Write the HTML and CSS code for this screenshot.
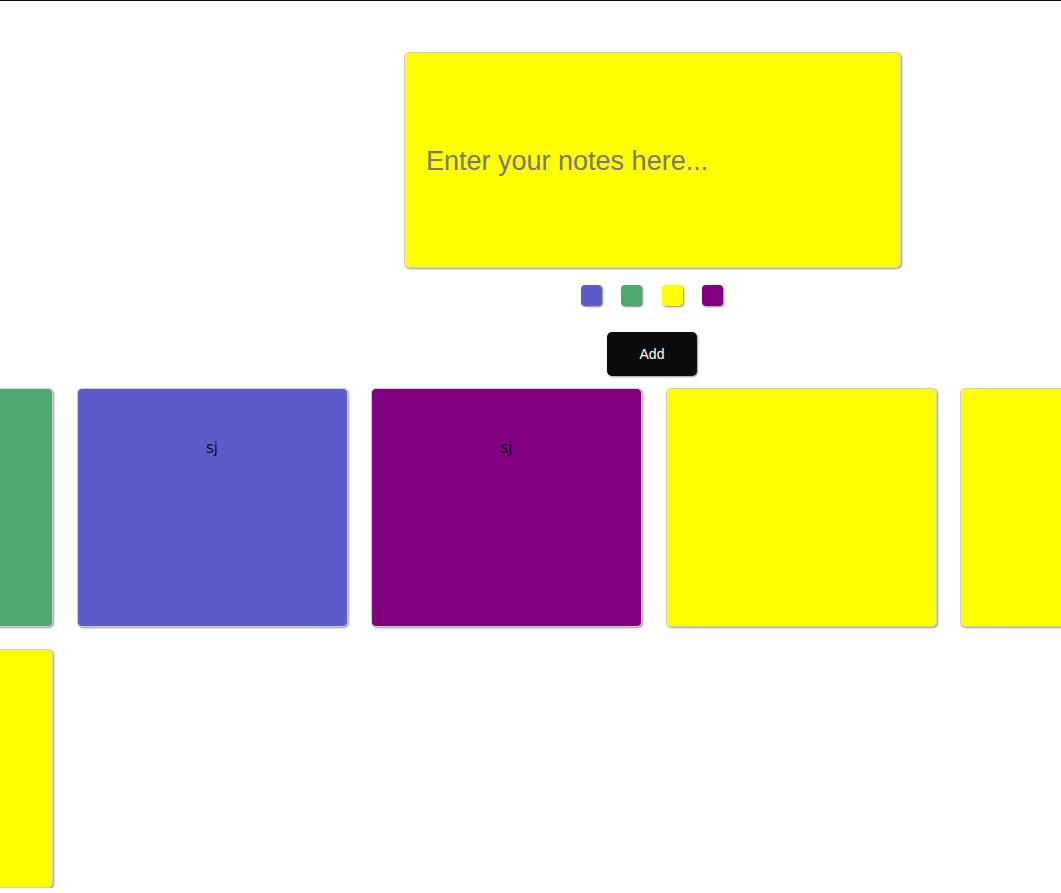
FILE: index.html
```html
<!DOCTYPE html>
<html>
<head>
<meta charset="utf-8">
<link rel="stylesheet" href="styles.css">
</head>
<body>
<div class="page">
  <div class="form">
    <textarea class="input" placeholder="Enter your notes here..."></textarea>
    <div class="swatches">
      <span class="swatch blue"></span>
      <span class="swatch green"></span>
      <span class="swatch yellow"></span>
      <span class="swatch purple"></span>
    </div>
    <button class="add">Add</button>
  </div>
  <div class="notes">
    <div class="note green"></div>
    <div class="note blue">sj</div>
    <div class="note purple">sj</div>
    <div class="note yellow"></div>
    <div class="note yellow"></div>
    <div class="note yellow"></div>
  </div>
</div>
</body>
</html>
```
FILE: styles.css
```css
html, body {
  margin: 0;
  padding: 0;
  overflow: hidden;
  background: #fff;
}
body {
  border-top: 1px solid #111;
  font-family: "Liberation Sans", Arial, sans-serif;
}
.page {
  padding-top: 51px;
}
.form {
  width: 497px;
  margin-left: 404px;
  display: flex;
  flex-direction: column;
  align-items: center;
}
.input {
  box-sizing: border-box;
  width: 497px;
  height: 216px;
  margin: 0;
  padding: 93px 21px 0;
  border: 1px solid #d0d0d0;
  border-radius: 5px;
  box-shadow: 1px 1px 2px #9a9a9a;
  background: #ffff00;
  font-family: "Liberation Sans", Arial, sans-serif;
  font-size: 27px;
  resize: none;
  outline: none;
  display: block;
}
.input::placeholder {
  color: #787878;
}
.swatches {
  display: flex;
  gap: 19.5px;
  margin-top: 17px;
  margin-right: 1px;
}
.swatch {
  display: block;
  width: 21px;
  height: 21px;
  border-radius: 4px;
  box-shadow: 1px 1px 2px #8a8a8a;
}
.add {
  margin-top: 26px;
  margin-right: 1px;
  width: 90px;
  height: 44px;
  border: none;
  border-radius: 5px;
  background: #0c0c0c;
  color: #fff;
  font-family: "Liberation Sans", Arial, sans-serif;
  font-size: 14px;
  box-shadow: 1px 1px 2px #999;
  padding: 0;
}
.notes {
  margin-top: 12px;
  margin-left: -218px;
  display: grid;
  grid-template-columns: repeat(5, 271px);
  column-gap: 23.5px;
  row-gap: 22px;
}
.note {
  box-sizing: border-box;
  height: 239px;
  border: 1px solid #cfcfcf;
  border-radius: 5px;
  box-shadow: 1px 1px 2px #9a9a9a;
  text-align: center;
  padding-top: 50px;
  font-family: "DejaVu Sans", "Open Sans", sans-serif;
  font-size: 15px;
  color: #111;
}
.blue { background: #5b5cc8; }
.green { background: #4fa771; }
.yellow { background: #ffff00; }
.purple { background: #800080; }
```
